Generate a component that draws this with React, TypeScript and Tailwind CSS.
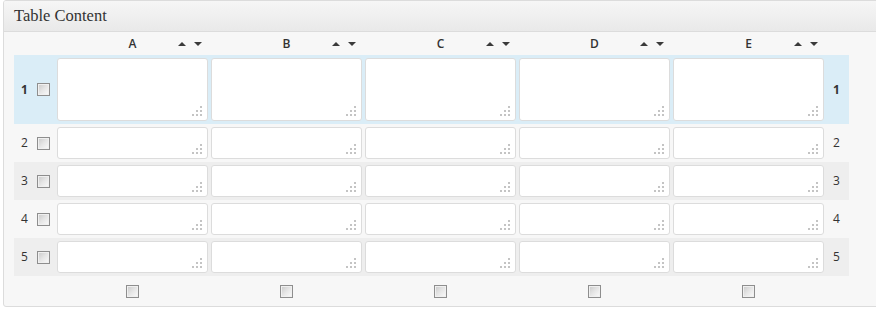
import React from "react";

const columns = ["A", "B", "C", "D", "E"];
const rows = [1, 2, 3, 4, 5];

const Checkbox = () => (
  <span className="inline-block w-[13px] h-[13px] border border-[#8e8e8e] bg-gradient-to-br from-[#c9c9c9] via-[#e6e6e6] to-[#fbfbfb] shadow-[inset_0_0_0_1px_#f0f0f0]" />
);

const SortArrows = () => (
  <span className="flex items-center gap-[8px]">
    <svg width="8" height="4" viewBox="0 0 8 4">
      <path d="M0 4 L4 0 L8 4 Z" fill="#3a3a3a" />
    </svg>
    <svg width="8" height="4" viewBox="0 0 8 4">
      <path d="M0 0 L8 0 L4 4 Z" fill="#3a3a3a" />
    </svg>
  </span>
);

const Grip = () => (
  <svg
    className="absolute right-[4px] bottom-[3px]"
    width="12"
    height="12"
    viewBox="0 0 12 12"
  >
    {[
      [9, 1],
      [5, 5],
      [9, 5],
      [1, 9],
      [5, 9],
      [9, 9],
    ].map(([x, y], i) => (
      <rect key={i} x={x} y={y} width="2" height="2" fill="#c4c4c4" />
    ))}
  </svg>
);

const Cell = ({ tall }: { tall: boolean }) => (
  <div
    className={`relative w-[151px] ${tall ? "h-[63px]" : "h-[32px]"} bg-white border border-[#dcdcdc] rounded-[3px]`}
  >
    <Grip />
  </div>
);

const rowBg = (n: number) => {
  if (n === 1) return "bg-[#daedf7]";
  if (n % 2 === 1) return "bg-[#eeeeee]";
  return "";
};

export default function App() {
  return (
    <div className="w-[876px] h-[309px] overflow-hidden bg-white font-['Open_Sans',sans-serif]">
      <div className="ml-[3px] w-[890px] h-[307px] border border-[#dcdcdc] rounded-[3px] bg-[#f7f7f7] overflow-hidden">
        <div className="h-[31px] border-b border-[#dcdcdc] bg-gradient-to-b from-[#f6f6f6] to-[#e9e9e9] flex items-center pl-[10px]">
          <span className="font-['Liberation_Serif',serif] text-[16.5px] text-[#333333]">
            Table Content
          </span>
        </div>

        <div className="ml-[10px] w-[835px]">
          {/* column headers */}
          <div className="flex h-[23px] items-center">
            <div className="w-[43px]" />
            <div className="flex gap-[3px]">
              {columns.map((c) => (
                <div key={c} className="relative w-[151px] flex items-center justify-center">
                  <span className="text-[12px] font-semibold text-[#333333]">{c}</span>
                  <span className="absolute right-[6px] top-1/2 -translate-y-1/2">
                    <SortArrows />
                  </span>
                </div>
              ))}
            </div>
          </div>

          {/* rows */}
          {rows.map((n) => (
            <div key={n} className={`flex items-center py-[3px] ${rowBg(n)}`}>
              <div className="w-[43px] flex items-center pl-[7px] gap-[9px]">
                <span
                  className={`w-[7px] text-[12px] text-[#333333] ${n === 1 ? "font-bold" : ""}`}
                >
                  {n}
                </span>
                <Checkbox />
              </div>
              <div className="flex gap-[3px]">
                {columns.map((c) => (
                  <Cell key={c} tall={n === 1} />
                ))}
              </div>
              <div
                className={`w-[25px] text-center text-[12px] text-[#333333] ${n === 1 ? "font-bold" : ""}`}
              >
                {n}
              </div>
            </div>
          ))}

          {/* footer checkboxes */}
          <div className="flex h-[30px] items-center">
            <div className="w-[43px]" />
            <div className="flex gap-[3px]">
              {columns.map((c) => (
                <div key={c} className="w-[151px] flex justify-center">
                  <Checkbox />
                </div>
              ))}
            </div>
          </div>
        </div>
      </div>
    </div>
  );
}
